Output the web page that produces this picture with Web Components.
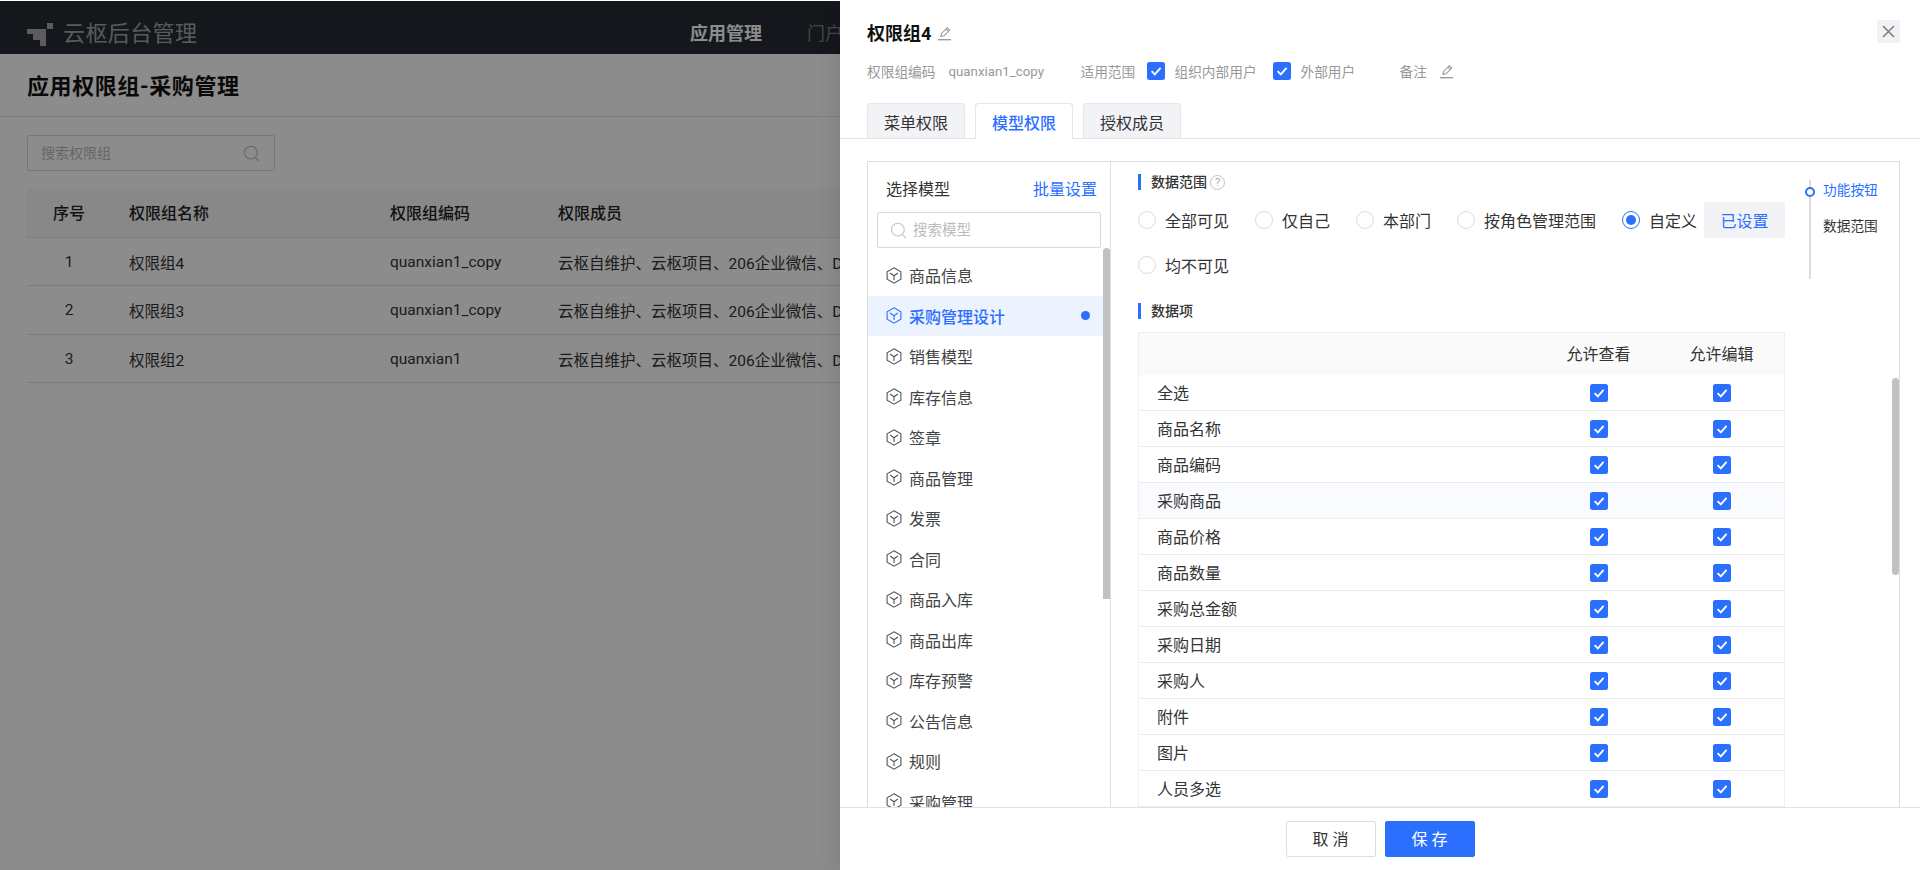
<!DOCTYPE html>
<html lang="zh-CN">
<head>
<meta charset="utf-8">
<title>应用权限组-采购管理</title>
<style>
  html,body{margin:0;padding:0;height:870px;overflow:hidden;background:#fff;}
  body{font-family:Roboto,"Noto Sans CJK SC",sans-serif;color:#333;font-size:16px;}
</style>
</head>
<body>
<app-root>
  <app-topbar slot="top"></app-topbar>
  <page-head slot="head">应用权限组-采购管理</page-head>
  <page-search slot="search" placeholder="搜索权限组"></page-search>
  <group-table slot="table"></group-table>

  <side-drawer slot="drawer">
    <drawer-head slot="header"></drawer-head>
    <tab-bar slot="header" active="1" items="菜单权限,模型权限,授权成员"></tab-bar>

    <model-panel slot="left">
      <model-item>商品信息</model-item>
      <model-item selected>采购管理设计</model-item>
      <model-item>销售模型</model-item>
      <model-item>库存信息</model-item>
      <model-item>签章</model-item>
      <model-item>商品管理</model-item>
      <model-item>发票</model-item>
      <model-item>合同</model-item>
      <model-item>商品入库</model-item>
      <model-item>商品出库</model-item>
      <model-item>库存预警</model-item>
      <model-item>公告信息</model-item>
      <model-item>规则</model-item>
      <model-item>采购管理</model-item>
    </model-panel>

    <scope-section slot="right" label="数据范围" help></scope-section>
    <data-section slot="right" label="数据项">
      <data-row>全选</data-row>
      <data-row>商品名称</data-row>
      <data-row>商品编码</data-row>
      <data-row hover>采购商品</data-row>
      <data-row>商品价格</data-row>
      <data-row>商品数量</data-row>
      <data-row>采购总金额</data-row>
      <data-row>采购日期</data-row>
      <data-row>采购人</data-row>
      <data-row>附件</data-row>
      <data-row>图片</data-row>
      <data-row>人员多选</data-row>
    </data-section>
    <anchor-nav slot="anchor"></anchor-nav>

    <ui-button slot="footer">取 消</ui-button>
    <ui-button slot="footer" primary>保 存</ui-button>
  </side-drawer>
</app-root>

<script>
const BLUE = '#2b6fff';
const def = (name, css, html, setup) => {
  customElements.define(name, class extends HTMLElement {
    constructor(){
      super();
      this.attachShadow({mode:'open'});
      const markup = typeof html === 'function' ? html(this) : html;
      this.shadowRoot.innerHTML = `<style>${css}</style>${markup}`;
      if (setup) setup(this);
    }
  });
};
const pencil = (c='#949494') => `<svg width="15" height="15" viewBox="0 0 14 14" fill="none" stroke="${c}" stroke-width=".95"><path d="M3.6 9.6 4.3 7 9.6 1.6 11.9 3.8 6.5 9.2Z"/><path d="M8.4 2.9 10.6 5.1"/><path d="M.8 12.8H13.2" stroke-width="1.2"/></svg>`;
const searchIcon = (c,s) => `<svg width="${s}" height="${s}" viewBox="0 0 16 16" fill="none" stroke="${c}" stroke-width="1.1"><circle cx="7.4" cy="7.2" r="6"/><path d="M11.6 11.6 14.8 14.9"/></svg>`;

def('app-root', `
  :host{display:block;position:relative;width:1920px;height:870px;padding-top:1px;box-sizing:border-box;overflow:hidden;background:#fff}
  .page{position:relative;height:869px;background:#fff}
  .mask{position:absolute;inset:0;background:rgba(0,0,0,.45)}
  .search{display:block;padding:18px 27px 18px}
`, `<div class="page">
    <slot name="top"></slot><slot name="head"></slot>
    <div class="search"><slot name="search"></slot></div>
    <slot name="table"></slot>
    <div class="mask"></div>
  </div><slot name="drawer"></slot>`);

def('app-topbar', `
  :host{display:flex;align-items:center;height:53px;background:#262a33;padding:13px 0 0 27px;box-sizing:border-box}
  svg{display:block;margin-right:10px}
  .name{font-size:22px;letter-spacing:.4px;color:#a5a5a5;width:627px;line-height:30px}
  nav{display:flex;gap:45px;font-size:18px;line-height:24px}
  .on{font-weight:700;color:#fff}.off{color:#808080}
`, `<svg width="26" height="23" viewBox="0 0 26 23" fill="#a8a8a8"><path d="M0 6H19V23H13V17H6V11H0Z"/><rect x="20" y="0" width="6" height="6"/></svg>
   <span class="name">云枢后台管理</span>
   <nav><span class="on">应用管理</span><span class="off">门户</span></nav>`);

def('page-head', `
  :host{display:flex;align-items:center;height:63px;padding:0 27px 2px;box-sizing:border-box;border-bottom:1px solid #e4e4e4;font-size:22px;letter-spacing:.6px;font-weight:700;color:#111}
`, `<slot></slot>`);

def('page-search', `
  :host{display:flex;align-items:center;justify-content:space-between;width:248px;height:36px;box-sizing:border-box;border:1px solid #d9d9d9;border-radius:2px;padding:0 14px 0 13px;font-size:14px;color:#bbb;background:#fff}
  svg{display:block}
  span{padding-bottom:2px}
`, el => `<span>${el.getAttribute('placeholder')}</span>${searchIcon('#bbb',17)}`);

def('group-table', `
  :host{display:block;margin:0 0 0 27px;width:1866px}
  .r{display:grid;grid-template-columns:102px 261px 168px 1fr;height:48.5px;align-items:center;border-bottom:1px solid #e4e4e4;box-sizing:border-box;font-size:15.5px;color:#333;white-space:nowrap;padding-top:1px}
  .h{background:#f7f8fa;color:#222;font-weight:500;font-size:16px;padding:0 0 2px}
  .n{text-align:center;padding-right:18px}
`, () => {
  const m='云枢自维护、云枢项目、206企业微信、D';
  const rows=[['1','权限组4','quanxian1_copy'],['2','权限组3','quanxian1_copy'],['3','权限组2','quanxian1']];
  return `<div class="r h"><span class="n">序号</span><span>权限组名称</span><span>权限组编码</span><span>权限成员</span></div>`+
    rows.map(r=>`<div class="r"><span class="n">${r[0]}</span><span>${r[1]}</span><span>${r[2]}</span><span>${m}</span></div>`).join('');
});

def('side-drawer', `
  :host{position:absolute;left:840px;top:0;width:1080px;height:870px;background:#fff;display:flex;flex-direction:column;box-shadow:-6px 0 16px rgba(0,0,0,.08)}
  .box{flex:1;min-height:0;margin:22px 20px 0 27px;border:1px solid #dedede;border-bottom:0;display:flex;overflow:hidden}
  .left{width:242px;flex:none;border-right:1px solid #dedede;position:relative;overflow:hidden}
  .right{flex:1;min-width:0;position:relative;display:flex;overflow:hidden}
  .main{width:647px;flex:none;padding:12px 0 0 27px}
  .side{padding:18px 0 0 24px}
  .thumb{position:absolute;right:0;top:216px;width:7px;height:197px;background:#c1c1c1;border-radius:4px}
  footer{height:63px;flex:none;box-sizing:border-box;border-top:1px solid #e2e2e2;display:flex;justify-content:center;gap:9px;padding-top:13px;background:#fff}
`, `<slot name="header"></slot>
  <div class="box">
    <div class="left"><slot name="left"></slot></div>
    <div class="right"><div class="main"><slot name="right"></slot></div><div class="side"><slot name="anchor"></slot></div><div class="thumb"></div></div>
  </div>
  <footer><slot name="footer"></slot></footer>`);

def('ui-check', `
  :host{display:inline-block;width:18px;height:18px;flex:none}
  svg{display:block}
`, `<svg width="18" height="18" viewBox="0 0 18 18"><rect width="18" height="18" rx="2.5" fill="${BLUE}"/><path d="M4.6 9.2 7.8 12.4 13.6 5.8" fill="none" stroke="#fff" stroke-width="1.9"/></svg>`);

def('drawer-head', `
  :host{display:block;padding:20px 20px 0 27px;position:relative}
  .title{display:flex;align-items:center;height:26px;font-size:18px;font-weight:700;color:#111;gap:6px}
  .title span{padding-bottom:2px}
  .meta{display:flex;align-items:center;height:20px;margin-top:15px;font-size:13.7px;color:#999;white-space:nowrap}
  .meta svg{margin-left:12px}
  .code{margin-left:13px;width:132px;font-size:13.3px}
  .scope{width:67px}
  .l{margin-left:9px}
  .a{width:99px}.b{width:99px}
  .close{position:absolute;top:20px;right:20px;width:23px;height:23px;background:#f0f2f5;display:flex;align-items:center;justify-content:center;border:0;padding:0}
`, `<div class="title"><span>权限组4</span>${pencil()}</div>
  <div class="meta"><span>权限组编码</span><span class="code">quanxian1_copy</span>
    <span class="scope">适用范围</span><ui-check></ui-check><span class="l a">组织内部用户</span><ui-check></ui-check><span class="l b">外部用户</span><span>备注</span>${pencil()}</div>
  <button class="close" aria-label="关闭"><svg width="13" height="13" viewBox="0 0 13 13" stroke="#7c7c7c" stroke-width="1.5"><path d="M1 1 12 12M12 1 1 12"/></svg></button>`);

def('tab-bar', `
  :host{display:flex;gap:10px;padding:0 0 0 27px;margin-top:22px;height:36px;box-sizing:border-box;border-bottom:1px solid #e4e4e4}
  .t{width:98px;height:35px;box-sizing:border-box;border:1px solid #e6e6e6;border-bottom:0;border-radius:4px 4px 0 0;background:#f2f3f7;font-size:16px;color:#333;display:flex;align-items:center;justify-content:center;padding-top:1px}
  .on{height:36px;background:#fff;color:${BLUE};font-weight:500}
`, el => {
  const act=+el.getAttribute('active');
  return el.getAttribute('items').split(',').map((t,i)=>`<div class="t ${i===act?'on':''}">${t}</div>`).join('');
});

def('model-panel', `
  :host{display:block;height:100%;position:relative}
  .hd{display:flex;justify-content:space-between;align-items:center;height:50px;box-sizing:border-box;padding:2px 13px 0 18px;font-size:16px;color:#333}
  .hd a{color:${BLUE};font-size:16px}
  .s{margin:0 9px 0 9px;height:36px;box-sizing:border-box;border:1px solid #d9d9d9;border-radius:2px;display:flex;align-items:center;gap:6px;padding:0 12px;font-size:14.5px;color:#bbb}
  .s svg{display:block}
  .s span{padding-bottom:4px}
  .list{padding:7px 7px 0 0}
  .thumb{position:absolute;right:0;top:86px;width:7px;height:351px;background:#c1c1c1;border-radius:4px 4px 0 0}
`, `<div class="hd"><span>选择模型</span><a>批量设置</a></div>
  <div class="s">${searchIcon('#c4c4c4',17)}<span>搜索模型</span></div>
  <div class="list"><slot></slot></div><div class="thumb"></div>`);

def('model-item', `
  :host{display:flex;align-items:center;height:40.5px;padding:0 13px 0 18px;font-size:16px;color:#444;gap:7px;position:relative}
  :host([selected]){background:#ecf3ff;color:${BLUE};font-weight:500}
  svg{display:block;flex:none}
  .dot{display:none;position:absolute;right:13px;top:50%;width:9px;height:9px;margin-top:-4.5px;border-radius:50%;background:${BLUE}}
  :host([selected]) .dot{display:block}
`, el => { const c = el.hasAttribute('selected') ? BLUE : '#555';
  return `<svg width="16" height="17" viewBox="0 0 15 16" fill="none" stroke="${c}" stroke-width="1.05"><path d="M7.5 .8 14 4.5V11.5L7.5 15.2 1 11.5V4.5Z"/><path d="M3.8 5.6 7.5 8.2 11.2 5.6M7.5 8.2V12.2"/></svg><span><slot></slot></span><i class="dot"></i>`; });

def('sec-title', `
  :host{display:flex;align-items:center;height:16px;border-left:3px solid ${BLUE};padding-left:10px;font-size:14px;font-weight:500;color:#333;gap:3px}
  .t{padding-bottom:3px}
  .q{width:13px;height:13px;border:1px solid #c4c4c4;border-radius:50%;color:#aaa;font-size:11px;font-weight:400;line-height:13px;text-align:center}
`, el => `<span class="t"><slot></slot></span>${el.hasAttribute('help')?'<span class="q">?</span>':''}`);

def('ui-radio', `
  :host{display:flex;align-items:center;height:36px;font-size:16px;color:#333;gap:9px;margin-right:26px;white-space:nowrap}
  :host([tight]){margin-right:7px}
  i{width:18px;height:18px;box-sizing:border-box;border:1px solid #dcdcdc;border-radius:50%;display:flex;align-items:center;justify-content:center;flex:none}
  :host([checked]) i{border-color:${BLUE}}
  :host([checked]) i::after{content:"";width:10px;height:10px;border-radius:50%;background:${BLUE}}
`, `<i></i><span><slot></slot></span>`);

def('scope-section', `
  :host{display:block}
  .g{display:flex;flex-wrap:wrap;row-gap:9px;margin-top:12px;width:660px}
  .btn{width:81px;height:36px;background:#f2f3f7;border-radius:2px;color:${BLUE};font-size:16px;display:flex;align-items:center;justify-content:center}
`, el => `<sec-title help>${el.getAttribute('label')}</sec-title>
  <div class="g"><ui-radio>全部可见</ui-radio><ui-radio>仅自己</ui-radio><ui-radio>本部门</ui-radio><ui-radio>按角色管理范围</ui-radio>
  <ui-radio checked tight>自定义</ui-radio><div class="btn">已设置</div><ui-radio>均不可见</ui-radio></div>`);

def('data-section', `
  :host{display:block;margin-top:20px}
  .t{margin-top:13px;width:647px;box-sizing:border-box;border:1px solid #efefef;border-bottom:0}
  .h{display:grid;grid-template-columns:1fr 123px 123px;height:42px;align-items:center;background:#fafafa;font-size:16px;color:#333;text-align:center;padding:0 1px 2px 0;box-sizing:border-box}
`, el => `<sec-title>${el.getAttribute('label')}</sec-title>
  <div class="t"><div class="h"><span></span><span>允许查看</span><span>允许编辑</span></div><slot></slot></div>`);

def('data-row', `
  :host{display:grid;grid-template-columns:1fr 123px 123px;height:36px;box-sizing:border-box;align-items:center;border-bottom:1.5px solid #ececec;font-size:16px;color:#333;padding:0 1px 0 18px}
  :host([hover]){background:#fafbff}
  .c{display:flex;justify-content:center}
  .l{padding-bottom:2px}
`, `<span class="l"><slot></slot></span><div class="c"><ui-check></ui-check></div><div class="c"><ui-check></ui-check></div>`);

def('anchor-nav', `
  :host{display:block;width:70px;height:99px;border-left:2px solid #dcdcdc;position:relative;font-size:13.7px;color:#333;box-sizing:border-box;padding-left:12px}
  .d{position:absolute;left:-6px;top:7px;width:10px;height:10px;box-sizing:border-box;border:2.5px solid ${BLUE};border-radius:50%;background:#fff}
  div.i{height:36px;line-height:20px;white-space:nowrap}
  .on{color:${BLUE}}
`, `<i class="d"></i><div class="i on">功能按钮</div><div class="i">数据范围</div>`);

def('ui-button', `
  :host{display:flex;align-items:center;justify-content:center;width:90px;height:36px;box-sizing:border-box;border:1px solid #dedede;border-radius:2px;background:#fff;color:#333;font-size:16px;white-space:pre;padding-bottom:2px}
  :host([primary]){background:${BLUE};border-color:${BLUE};color:#fff}
`, `<slot></slot>`);
</script>
</body>
</html>
